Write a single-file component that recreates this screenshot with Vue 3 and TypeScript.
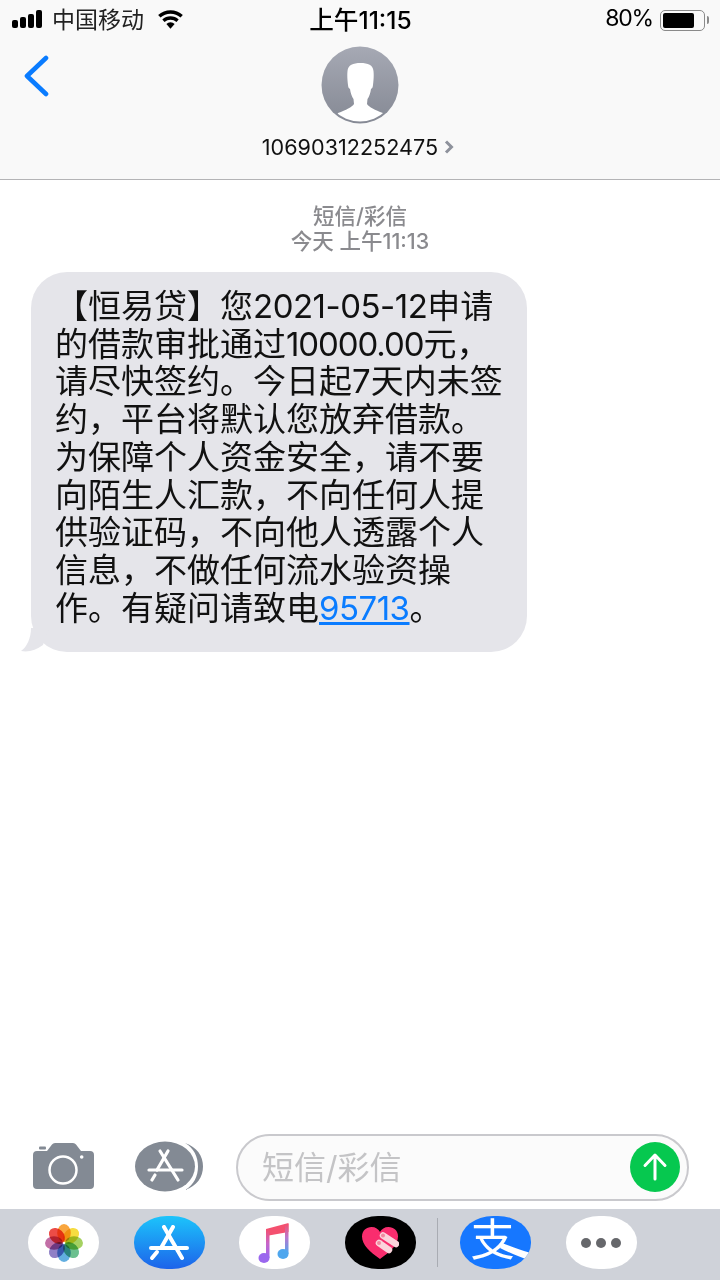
<template>
  <div class="screen">
    <header class="top">
      <div class="status">
        <div class="status__left">
          <span class="signal"><i v-for="h in signalBars" :key="h" :style="{ height: `${h}px` }"></i></span>
          <span class="carrier">中国移动</span>
          <svg class="wifi" width="27" height="20" viewBox="0 0 28 20">
            <path d="M14 20l-4.3-4.8a6.2 6.2 0 0 1 8.6 0z" fill="#000" />
            <path d="M7.8 13.1l-2.3-2.6a12.6 12.6 0 0 1 17 0l-2.3 2.6a9.2 9.2 0 0 0-12.4 0z" fill="#000" />
            <path d="M3.6 8.4L1.2 5.8a19 19 0 0 1 25.6 0l-2.4 2.6a15.6 15.6 0 0 0-20.8 0z" fill="#000" />
          </svg>
        </div>
        <span class="clock">上午11:15</span>
        <div class="status__right">
          <span class="percent">80%</span>
          <span class="battery"><i></i></span>
          <span class="battery__cap"></span>
        </div>
      </div>
      <div class="nav">
        <svg class="back" width="26" height="42" viewBox="0 0 26 42">
          <path d="M23 3L4 21l19 18" fill="none" stroke="#0a7cff" stroke-width="4.6" stroke-linecap="round" stroke-linejoin="round" />
        </svg>
        <svg class="avatar" width="78" height="78" viewBox="0 0 78 78">
          <defs>
            <linearGradient id="avatarBg" x1="0" y1="0" x2="0" y2="1">
              <stop offset="0" stop-color="#a6a9b4" />
              <stop offset="1" stop-color="#858994" />
            </linearGradient>
            <clipPath id="avatarClip"><circle cx="39" cy="39" r="36.5" /></clipPath>
          </defs>
          <circle cx="39" cy="39" r="38.5" fill="url(#avatarBg)" />
          <g clip-path="url(#avatarClip)">
            <path
              d="M39.5 17C32 17 27 19 26.5 25C26 30 26.5 35 27 39C27.2 41 27.5 42 29 43C29.5 47 31 51 32.5 53L33 58C31 61 25 64 17 67L10 80H68L62 67C54 64 48 61 46 58L46.5 53C48 51 49.5 47 50 43C51.5 42 51.8 41 52 39C52.5 35 53 30 52.5 25C52 19 47 17 39.5 17Z"
              fill="#fff"
            />
          </g>
        </svg>
        <div class="contact">
          <span>10690312252475</span>
          <svg width="12" height="16" viewBox="0 0 12 16">
            <path d="M3 2.5L8.5 8 3 13.5" fill="none" stroke="#8e929c" stroke-width="3" />
          </svg>
        </div>
      </div>
    </header>

    <main class="thread">
      <div class="stamp">
        <div>短信/彩信</div>
        <div>今天 <span>上午11:13</span></div>
      </div>
      <div class="bubble">
        <div>【恒易贷】您<span class="num">2021-05-12</span>申请</div>
        <div>的借款审批通过<span class="num num--tight">10000.00</span>元，</div>
        <div>请尽快签约。今日起7天内未签</div>
        <div>约，平台将默认您放弃借款。</div>
        <div>为保障个人资金安全，请不要</div>
        <div>向陌生人汇款，不向任何人提</div>
        <div>供验证码，不向他人透露个人</div>
        <div>信息，不做任何流水验资操</div>
        <div>作。有疑问请致电<a class="link num">95713</a>。</div>
        <svg class="bubble__tail" width="28" height="24" viewBox="0 0 28 24">
          <path d="M28 0H10C10 10 6 19 0 23C8 24.5 15 22 22 17Z" fill="#e5e5ea" />
        </svg>
      </div>
    </main>

    <div class="composer">
      <svg class="camera" width="61" height="46" viewBox="0 0 61 46">
        <path d="M14 8L19 1.5Q20 0 22 0H40Q42 0 43 1.5L48 8H57Q61 8 61 12V42Q61 46 57 46H4Q0 46 0 42V12Q0 8 4 8Z" fill="#838a94" />
        <rect x="6" y="3.5" width="7" height="3" rx="1" fill="#838a94" />
        <circle cx="30" cy="27" r="13.5" fill="none" stroke="#fff" stroke-width="2.5" />
        <circle cx="48.7" cy="14" r="1.8" fill="#fff" />
      </svg>
      <svg class="apps" width="70" height="52" viewBox="0 0 70 52">
        <ellipse cx="30" cy="25.5" rx="30" ry="25" fill="#838a94" />
        <path d="M50 2C62 6 68 15 68 25.5S62 45 50 49C59 44 63 35 63 25.5S59 7 50 2Z" fill="#838a94" />
        <g stroke="#fff" stroke-width="3.2" stroke-linecap="round" fill="none">
          <path d="M33 10L22 29" />
          <path d="M25 10L43 39" />
          <path d="M14 29H47" />
          <path d="M17 39L20 34" />
        </g>
      </svg>
      <div class="field">
        <span class="field__hint">短信/彩信</span>
        <span class="send">
          <svg width="28" height="30" viewBox="0 0 28 30">
            <path d="M14 27V4M4 13.5L14 3l10 10.5" fill="none" stroke="#fff" stroke-width="3" stroke-linecap="round" stroke-linejoin="round" />
          </svg>
        </span>
      </div>
    </div>

    <div class="tray">
      <span class="tile">
        <svg width="38" height="38" viewBox="-19 -19 38 38">
          <ellipse
            v-for="p in petals"
            :key="p.angle"
            class="petal"
            cx="0"
            cy="-10"
            rx="6.8"
            ry="9"
            :fill="p.color"
            :transform="`rotate(${p.angle})`"
          />
        </svg>
      </span>
      <span class="tile tile--store">
        <svg width="40" height="36" viewBox="0 0 40 36">
          <g stroke="#fff" stroke-width="4" stroke-linecap="round" fill="none">
            <path d="M24 2L12 23" />
            <path d="M15 2L33 33" />
            <path d="M2 23H38" />
            <path d="M3 33L8 27" />
          </g>
        </svg>
      </span>
      <span class="tile">
        <svg width="34" height="42" viewBox="0 0 34 42">
          <defs>
            <linearGradient id="noteLeft" x1="0" y1="0" x2="0" y2="1">
              <stop offset="0" stop-color="#f4506f" />
              <stop offset="0.5" stop-color="#c765c9" />
              <stop offset="1" stop-color="#9a67ee" />
            </linearGradient>
            <linearGradient id="noteRight" x1="0" y1="0" x2="0" y2="1">
              <stop offset="0" stop-color="#f4506f" />
              <stop offset="0.45" stop-color="#b878cf" />
              <stop offset="1" stop-color="#4ea6ee" />
            </linearGradient>
          </defs>
          <path d="M8 7L30.5 1V10L8 14Z" fill="#f4506f" />
          <rect x="8" y="7" width="3.5" height="29" fill="url(#noteLeft)" />
          <rect x="27" y="2" width="3.5" height="30" fill="url(#noteRight)" />
          <ellipse cx="6" cy="36" rx="5.5" ry="5" fill="#9a67ee" />
          <ellipse cx="25" cy="32" rx="5.5" ry="5" fill="#4ea6ee" />
        </svg>
      </span>
      <span class="tile tile--heart">
        <svg width="38" height="34" viewBox="0 0 38 34">
          <path d="M19 33C9 26 1 19 1 10.5 1 4.5 5.5 1 10.5 1c4 0 7 2 8.5 5 1.5-3 4.5-5 8.5-5C32.5 1 37 4.5 37 10.5 37 19 29 26 19 33z" fill="#f92d6e" />
          <path d="M22 9.5L35 18" stroke="#fbd4dc" stroke-width="6.5" stroke-linecap="round" />
          <path d="M18 17L28 24" stroke="#fbd4dc" stroke-width="6.5" stroke-linecap="round" />
          <circle cx="22" cy="9.5" r="2" fill="#f08aa0" />
          <circle cx="18" cy="17" r="2" fill="#f08aa0" />
        </svg>
      </span>
      <span class="tray__divider"></span>
      <span class="tile tile--alipay">
        <span class="alipay-char">支</span>
        <svg class="alipay-swoosh" width="71" height="53" viewBox="0 0 71 53">
          <path d="M42 27C50 30 60 34 71 37V45C60 41 50 37 40 32Z" fill="#fff" />
        </svg>
      </span>
      <span class="tile tile--more"><i></i><i></i><i></i></span>
    </div>
  </div>
</template>

<script setup lang="ts">
const signalBars = [8, 11, 14, 18];

const petals = [
  { angle: 0, color: '#f9a63e' },
  { angle: 45, color: '#f6dc40' },
  { angle: 90, color: '#a5d161' },
  { angle: 135, color: '#6cc08f' },
  { angle: 180, color: '#62aee0' },
  { angle: 225, color: '#8f80c6' },
  { angle: 270, color: '#c26fa6' },
  { angle: 315, color: '#ec4c46' },
];
</script>

<style>
html,
body {
  margin: 0;
  background: #fff;
}
</style>

<style scoped>
.screen {
  width: 720px;
  height: 1280px;
  display: flex;
  flex-direction: column;
  overflow: hidden;
  background: #fff;
  font-family: Inter, "Noto Sans CJK SC", sans-serif;
  color: #000;
}

.top {
  height: 180px;
  box-sizing: border-box;
  flex-shrink: 0;
  background: #f9f9f9;
  border-bottom: 1px solid #b4b4b6;
}

.status {
  height: 40px;
  box-sizing: border-box;
  padding: 0 11px 5px 12px;
  display: grid;
  grid-template-columns: 1fr auto 1fr;
  align-items: center;
}

.status__left {
  display: flex;
  align-items: center;
}

.signal {
  display: flex;
  align-items: flex-end;
  gap: 2px;
  width: 31px;
  height: 18px;
  margin-top: 2px;
}

.signal i {
  width: 6px;
  border-radius: 2px;
  background: #000;
}

.carrier {
  margin-left: 9px;
  font-size: 23px;
  color: #222;
}

.wifi {
  margin: 2px 0 0 13px;
}

.clock {
  font-size: 24.6px;
  font-weight: 500;
}

.status__right {
  display: flex;
  align-items: center;
  justify-content: flex-end;
}

.percent {
  margin-right: 7px;
  font-size: 23px;
  letter-spacing: -1.2px;
}

.battery {
  box-sizing: border-box;
  width: 45px;
  height: 21px;
  margin-top: 4px;
  padding: 2px;
  border: 1.5px solid #8a8a8a;
  border-radius: 5px;
  display: flex;
}

.battery i {
  width: 31px;
  border-radius: 2px;
  background: #000;
}

.battery__cap {
  width: 2px;
  height: 8px;
  margin: 4px 0 0 2px;
  background: #8a8a8a;
  border-radius: 0 2px 2px 0;
}

.nav {
  position: relative;
  display: flex;
  flex-direction: column;
  align-items: center;
  padding-top: 6px;
}

.back {
  position: absolute;
  left: 23px;
  top: 15px;
}

.contact {
  display: flex;
  align-items: center;
  gap: 5px;
  margin: 5px 3px 0 0;
  height: 36px;
  font-size: 21.6px;
  color: #111;
}

.thread {
  flex: 1;
  min-height: 0;
}

.stamp {
  margin-top: 24px;
  text-align: center;
  font-size: 21.5px;
  line-height: 25px;
  font-weight: 500;
  color: #8a8a8e;
}

.bubble {
  position: relative;
  box-sizing: border-box;
  width: 496px;
  height: 380px;
  margin: 18px 0 0 31px;
  padding: 16px 0 0 24px;
  background: #e5e5ea;
  border-radius: 36px;
  font-size: 33px;
  line-height: 37.7px;
  white-space: nowrap;
  color: #111;
}

.bubble__tail {
  position: absolute;
  left: -10px;
  bottom: 0;
}

.num {
  letter-spacing: -0.5px;
}

.num--tight {
  letter-spacing: -1.1px;
}

.link {
  color: #0a7cff;
  text-decoration: underline;
}

.composer {
  height: 75px;
  padding-left: 33px;
  flex-shrink: 0;
  display: flex;
  align-items: flex-start;
}

.camera {
  margin-top: 9px;
}

.apps {
  margin: 7px 0 0 41px;
}

.field {
  box-sizing: border-box;
  width: 453px;
  height: 67px;
  margin-left: 31px;
  padding: 0 7px 2px 24px;
  border: 2px solid #c9c9cd;
  border-radius: 34px;
  background: #fbfbfb;
  display: flex;
  align-items: center;
  justify-content: space-between;
}

.field__hint {
  margin-top: -3px;
  font-size: 32px;
  color: #c4c4c6;
}

.send {
  width: 50px;
  height: 50px;
  border-radius: 50%;
  background: #06c84f;
  display: flex;
  align-items: center;
  justify-content: center;
}

.tray {
  height: 71px;
  flex-shrink: 0;
  padding: 7px 0 0 28px;
  box-sizing: border-box;
  background: #cfd2d9;
  display: flex;
  align-items: flex-start;
  gap: 34.5px;
}

.tile {
  position: relative;
  width: 71px;
  height: 53px;
  flex-shrink: 0;
  border-radius: 33px / 26px;
  background: #fff;
  display: flex;
  align-items: center;
  justify-content: center;
  overflow: hidden;
}

.petal {
  mix-blend-mode: multiply;
}

.tile--store {
  background: linear-gradient(#1cc4fb, #1d63ea);
}

.tile--heart {
  background: #000;
}

.tile--alipay {
  overflow: visible;
  background: #1677ff;
}

.alipay-char {
  margin: -6px 6px 0 0;
  font-size: 44px;
  line-height: 46px;
  color: #fff;
}

.alipay-swoosh {
  position: absolute;
  left: 0;
  top: 0;
  border-radius: 33px / 26px;
}

.tile--more {
  gap: 5px;
}

.tile--more i {
  width: 10px;
  height: 10px;
  border-radius: 50%;
  background: #66676b;
}

.tray__divider {
  width: 1px;
  height: 49px;
  margin: 2px -12.5px 0 -13px;
  background: #a9acb3;
}
</style>
